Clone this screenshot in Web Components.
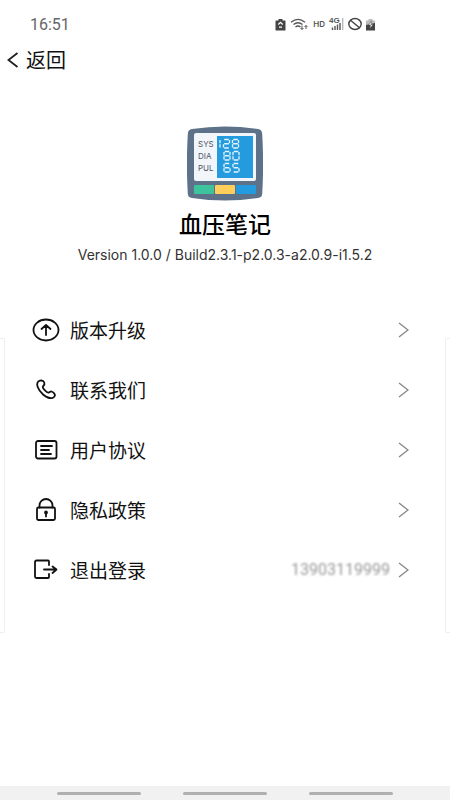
<!DOCTYPE html>
<html lang="zh-CN">
<head>
<meta charset="utf-8">
<meta name="viewport" content="width=device-width, initial-scale=1">
<title>血压笔记</title>
<style>
  body { margin: 0; background: #fff; color: #111; font-family: Roboto, "Noto Sans CJK SC", sans-serif; }
</style>
</head>
<body>
<about-page></about-page>

<script>
const define = (name, html, init) => {
  customElements.define(name, class extends HTMLElement {
    constructor() {
      super();
      const root = this.attachShadow({ mode: 'open' });
      const t = document.createElement('template');
      t.innerHTML = html;
      root.append(t.content.cloneNode(true));
    }
    connectedCallback() { if (init) init(this, this.shadowRoot); }
  });
};

const stroke = 'fill="none" stroke="#111" stroke-width="1.800" stroke-linecap="round" stroke-linejoin="round"';
const icons = {
  upgrade: `<ellipse cx="14" cy="14" rx="12.5" ry="10.5"/><path d="M14 19V9.5M9.5 13L14 9l4.500 4"/>`,
  phone: `<path d="M8 4.600C10 4.200 11.500 4.600 12.300 6.500C13 8.200 12.300 9 11 10.300C10.400 11.300 11 12.300 12.300 13.700C13.800 15.300 15 16.800 16.600 16.600C17.800 16.300 18.300 15.200 19.500 15.500C21 15.900 22.400 17.300 22.900 18.600C23.300 20 21.800 21.700 20 22.100C17 22.600 14 21 11.300 18.700C8.800 16.500 6.700 14 5.700 11C4.600 8 5.200 5.200 8 4.600Z"/>`,
  agreement: `<rect x="4" y="5" width="20.500" height="17.500" rx="2"/><path d="M9 10h11M9 14h8M9 18h10"/>`,
  privacy: `<rect x="5" y="11.500" width="18" height="12.500" rx="1.500"/><path d="M7.500 11.500V9.500a6.500 6.500 0 0 1 13 0V11.500M14 17v3.500"/><circle cx="14" cy="16.500" r="1" fill="#111"/>`,
  logout: `<path d="M17 9V5.500q0-1-1-1H4.500q-1.500 0-1.500 1.500V20.500q0 1.500 1.500 1.500H16q1 0 1-1V18M12 13.500h12M20.500 10.500L24.500 13.500l-4 3.500"/>`
};

define('status-bar', `
<style>
  :host { display: flex; justify-content: space-between; align-items: center; height: 48px; padding: 0 75px 0 30px; color: #666; }
  time { font-size: 16px; }
  div { display: flex; align-items: center; gap: 4px; }
  svg { display: block; }
  .hd { font-size: 8px; font-weight: 600; font-family: Inter, sans-serif; color: #555; }
</style>
<time>16:51</time>
<div>
  <svg width="11" height="13" viewBox="0 0 11 13"><path d="M3.500 1h4v1.500H10q.5 0 .5.500v9q0 .5-.5.500H1q-.5 0-.5-.5V3q0-.5.500-.5h2.500z" fill="#444"/><path d="M3.300 6.500l2.200-2.200 2.200 2.200M4 9.200h3" stroke="#fff" stroke-width="1.200" fill="none"/></svg>
  <svg width="19" height="13" viewBox="0 0 19 13" fill="none" stroke="#555" stroke-width="1.300"><path d="M1 4.200q7-5.500 14 0M3.500 6.500q4.500-3.500 9 0M5.500 9q2.500-2 5 0"/><path d="M12 7.500v4M10.500 10l1.500 1.500 1.500-1.500M16 11V7.500M14.500 9L16 7.500 17.500 9" stroke-width="1"/></svg>
  <span class="hd">HD</span>
  <svg width="15" height="14" viewBox="0 0 15 14"><text x="0" y="6" font-size="8" font-weight="700" font-family="Liberation Sans, sans-serif" fill="#555">4G</text><path d="M3.500 10.500V13M6 9v4M8.500 7.500V13M11 6v7" stroke="#555" stroke-width="1.400"/><path d="M13.700 1v12" stroke="#bbb" stroke-width="1.400"/></svg>
  <svg width="14" height="14" viewBox="0 0 14 14" fill="none" stroke="#444" stroke-width="1.400"><ellipse cx="7" cy="7" rx="6.200" ry="5.500"/><path d="M2.500 3.200l9 7.600"/></svg>
  <svg width="9" height="13" viewBox="0 0 9 13"><path d="M2.500 1h4v1.500H9V7H0V2.500h2.500z" fill="#bbb"/><path d="M0 7l9-2v7.500H0z" fill="#444"/><path d="M5.500 3L2.500 7h2l-.5 3.500L7 6.500H5z" fill="#fff" stroke="#555" stroke-width=".5"/></svg>
</div>`);

define('nav-back', `
<style>
  :host { display: flex; height: 24px; padding: 0 6px; }
  button { display: flex; align-items: center; gap: 7px; border: 0; padding: 0; background: none; color: inherit; font: 20px/24px "Noto Sans CJK SC", sans-serif; }
  svg { display: block; }
</style>
<button type="button">
  <svg width="13" height="18" viewBox="0 0 13 18" fill="none" stroke="#222" stroke-width="1.800"><path d="M11.500 2L2.500 9l9 7"/></svg>
  <slot></slot>
</button>`);

define('monitor-logo', `
<style>
  :host { display: block; }
  svg { display: block; }
  text { font-family: Inter, sans-serif; font-size: 8px; fill: #4c5668; }
</style>
<svg width="76" height="75" viewBox="0 0 76 75" role="img" aria-label="血压计">
  <path d="M5 3Q38-2 71 3Q75 3.500 75.200 8Q77 38 75.200 68Q75 71.500 71 72Q38 77 5 72Q1 71.500 .8 68Q-1 38 .8 8Q1 3.500 5 3Z" fill="#5d7188"/>
  <rect x="7" y="7" width="62" height="48" rx="2" fill="#f2f5f9"/>
  <rect x="30" y="10" width="36" height="42" fill="#249bdf"/>
  <text x="11" y="21">SYS</text><text x="11" y="33">DIA</text><text x="11" y="45">PUL</text>
  <g id="digits" fill="none" stroke="#e6f5ff" stroke-width="1.300"></g>
  <rect x="7" y="59" width="20" height="9" rx="1" fill="#3dc49c"/>
  <rect x="28" y="59" width="20" height="9" rx="1" fill="#ffcf5c"/>
  <rect x="49" y="59" width="20" height="9" rx="1" fill="#249bdf"/>
</svg>`, (host, root) => {
  // Seven-segment readings
  const seg = { a: 'M.7 0h4.600', b: 'M6 .5v3.200', c: 'M6 4.800v3.200', d: 'M.7 8.500h4.600', e: 'M0 4.800v3.200', f: 'M0 .5v3.200', g: 'M.7 4.250h4.600' };
  const on = { 1: 'bc', 2: 'abged', 8: 'abcdefg', 0: 'abcdef', 6: 'acdefg', 5: 'afgcd' };
  const rows = [['1', 27, 13.5], ['2', 36.5, 13.5], ['8', 45.5, 13.5], ['8', 37, 25.5], ['0', 46, 25.5], ['6', 37, 37.5], ['5', 46, 37.5]];
  root.getElementById('digits').innerHTML = rows.map(([n, x, y]) =>
    `<path transform="translate(${x} ${y})" d="${[...on[n]].map(s => seg[s]).join('')}"/>`).join('');
});

define('app-identity', `
<style>
  :host { display: flex; flex-direction: column; align-items: center; padding: 54px 16px 36px; }
  h1 { margin: 6px 0 0; font: 500 23px/32px "Noto Sans CJK SC", sans-serif; color: #000; }
  p { margin: 7px 0 0; font: 14px/18px Inter, sans-serif; color: #333; }
</style>
<monitor-logo></monitor-logo>
<h1><slot name="name"></slot></h1>
<p><slot name="version"></slot></p>`);

define('menu-row', `
<style>
  :host { display: block; }
  button { display: flex; align-items: center; width: 100%; height: 60px; border: 0; padding: 0 36px 0 27px; background: none; color: inherit; text-align: left; font: 19px/28px "Noto Sans CJK SC", sans-serif; }
  .label { flex: 1; margin-left: 10px; }
  svg { display: block; }
  .arrow { margin-left: 8px; }
  ::slotted([slot="value"]) { font: 16px/20px Roboto, sans-serif; color: #999; filter: blur(1px); }
</style>
<button type="button">
  <svg id="icon" width="28" height="28" viewBox="0 0 28 28" ${stroke}></svg>
  <span class="label"><slot></slot></span>
  <slot name="value"></slot>
  <svg class="arrow" width="11" height="18" viewBox="0 0 11 18" fill="none" stroke="#888" stroke-width="1.400"><path d="M1 2l9 7-9 7"/></svg>
</button>`, (host, root) => { root.getElementById('icon').innerHTML = icons[host.getAttribute('icon')]; });

define('side-peek', `
<style>
  :host { display: block; box-sizing: border-box; width: 5px; margin-top: 38px; height: 295px; border: 1px solid #eee; }
  :host([side="left"]) { border-left: 0; border-radius: 0 2px 2px 0; }
  :host([side="right"]) { border-right: 0; border-radius: 2px 0 0 2px; }
</style>`);

define('gesture-bar', `
<style>
  :host { display: flex; justify-content: center; align-items: center; gap: 42px; height: 14px; background: #f1f1f1; }
  i { width: 84px; height: 3px; border-radius: 2px; background: #b0b0b0; }
</style>
<i></i><i></i><i></i>`);

define('about-page', `
<style>
  :host { display: flex; flex-direction: column; min-height: 100vh; }
  main { flex: 1; }
  .list { display: flex; }
  nav { flex: 1; min-width: 0; }
</style>
<status-bar></status-bar>
<nav-back>返回</nav-back>
<main>
  <app-identity>
    <span slot="name">血压笔记</span>
    <span slot="version">Version 1.0.0 / Build2.3.1-p2.0.3-a2.0.9-i1.5.2</span>
  </app-identity>
  <div class="list">
    <side-peek side="left"></side-peek>
    <nav>
      <menu-row icon="upgrade">版本升级</menu-row>
      <menu-row icon="phone">联系我们</menu-row>
      <menu-row icon="agreement">用户协议</menu-row>
      <menu-row icon="privacy">隐私政策</menu-row>
      <menu-row icon="logout">退出登录<span slot="value">13903119999</span></menu-row>
    </nav>
    <side-peek side="right"></side-peek>
  </div>
</main>
<gesture-bar></gesture-bar>`);
</script>
</body>
</html>
